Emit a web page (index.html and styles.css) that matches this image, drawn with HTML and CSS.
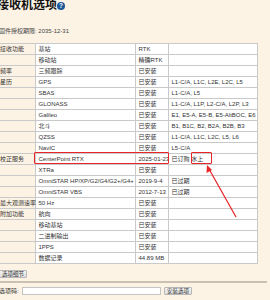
FILE: index.html
```html
<!DOCTYPE html>
<html lang="zh">
<head>
<meta charset="utf-8">
<link rel="stylesheet" href="styles.css">
</head>
<body>
<div class="page">
  <h1 class="title">接收机选项<span class="help">?</span></h1>
  <p class="info">固件授权期限: 2035-12-31</p>
  <table class="opts">
    <colgroup><col class="c1"><col class="c2"><col class="c3"><col class="c4"></colgroup>
    <tr><th>接收功能</th><td>基站</td><td>RTK</td><td></td></tr>
    <tr><th></th><td>移动站</td><td>精确RTK</td><td></td></tr>
    <tr><th>频率</th><td>三频跟踪</td><td>已安装</td><td></td></tr>
    <tr><th>星历</th><td>GPS</td><td>已安装</td><td>L1-C/A, L1C, L2E, L2C, L5</td></tr>
    <tr><th></th><td>SBAS</td><td>已安装</td><td>L1-C/A, L5</td></tr>
    <tr><th></th><td>GLONASS</td><td>已安装</td><td>L1-C/A, L1P, L2-C/A, L2P, L3</td></tr>
    <tr><th></th><td>Galileo</td><td>已安装</td><td>E1, E5-A, E5-B, E5-AltBOC, E6</td></tr>
    <tr><th></th><td>北斗</td><td>已安装</td><td>B1, B1C, B2, B2A, B2B, B3</td></tr>
    <tr><th></th><td>QZSS</td><td>已安装</td><td>L1-C/A, L1C, L2C, L5, L6</td></tr>
    <tr><th></th><td>NavIC</td><td>已安装</td><td>L5-C/A</td></tr>
    <tr><th>校正服务</th><td>CenterPoint RTX</td><td>2025-01-23</td><td>已订购 水上</td></tr>
    <tr><th></th><td>XTRa</td><td>已安装</td><td></td></tr>
    <tr><th></th><td>OmniSTAR HP/XP/G2/G4/G2+/G4+</td><td>2019-9-4</td><td>已过期</td></tr>
    <tr><th></th><td>OmniSTAR VBS</td><td>2012-7-13</td><td>已过期</td></tr>
    <tr><th>最大观测速率</th><td>50 Hz</td><td>已安装</td><td></td></tr>
    <tr><th>附加功能</th><td>航向</td><td>已安装</td><td></td></tr>
    <tr><th></th><td>移动基站</td><td>已安装</td><td></td></tr>
    <tr><th></th><td>二进制输出</td><td>已安装</td><td></td></tr>
    <tr><th></th><td>1PPS</td><td>已安装</td><td></td></tr>
    <tr><th></th><td>数据记录</td><td>44.89 MB</td><td></td></tr>
  </table>
  <div class="details"><button class="btn">选项细节</button></div>
  <div class="install">
    <label class="lbl">选项码:</label>
    <input class="code" type="text">
    <button class="btn">安装选项</button>
  </div>

  <div class="mark mark-a"></div>
  <div class="mark mark-b"></div>
  <svg class="arrow" width="270" height="300" viewBox="0 0 270 300">
    <line x1="236" y1="218" x2="209" y2="170" stroke="#e8262a" stroke-width="1.3"/>
    <polygon points="207,166 206.5,174 212,171" fill="#e8262a"/>
  </svg>
</div>
</body>
</html>
```
FILE: styles.css
```css
* { box-sizing: border-box; }
html, body { margin: 0; padding: 0; }
body {
  background: #fdf3e5;
  font-family: "Liberation Sans", Arial, "Noto Sans CJK SC", sans-serif;
  color: #333;
  width: 270px;
  height: 300px;
  overflow: hidden;
}
.page {
  position: relative;
  width: 270px;
  height: 300px;
}
.title {
  margin: -1px 0 0 -3px;
  font-size: 12px;
  line-height: 13px;
  font-weight: bold;
  color: #111;
  display: flex;
  align-items: center;
  gap: 0;
}
.help {
  display: inline-flex;
  align-items: center;
  justify-content: center;
  width: 8px;
  height: 8px;
  border-radius: 50%;
  background: #1d5799;
  color: #fff;
  font-size: 6.5px;
  line-height: 8px;
  font-weight: bold;
  margin-top: 1px;
}
.info {
  margin: 15px 0 0 -1px;
  font-size: 6px;
  line-height: 8px;
  color: #444;
}
.opts {
  margin: 8px 0 0 -4px;
  border-collapse: collapse;
  table-layout: fixed;
  width: 261px;
  font-size: 6px;
}
.c1 { width: 39px; }
.c2 { width: 100px; }
.c3 { width: 33px; }
.c4 { width: 89px; }
.opts tr { height: 11px; }
.opts th, .opts td {
  border: 1px solid #c9c9c9;
  padding: 0 2px 0 3px;
  line-height: 9px;
  height: 11px;
  white-space: nowrap;
  overflow: visible;
  text-align: left;
  font-weight: normal;
  color: #333;
}
.opts th {
  background: transparent;
  padding-left: 4px;
  border-left: none;
}
.opts td { background: #fff; }
.details {
  margin: 6px 0 0 -1px;
  padding-bottom: 3px;
  border-bottom: 2px solid #cbc1b3;
  width: 268px;
}
.btn {
  font-family: inherit;
  font-size: 5.5px;
  line-height: 6px;
  height: 8px;
  padding: 0 2px;
  border: 1px solid #b8b8b8;
  border-radius: 1px;
  background: linear-gradient(#f6f6f6, #dcdcdc);
  color: #333;
  display: block;
  white-space: nowrap;
}
.install {
  display: flex;
  align-items: center;
  gap: 2px;
  margin: 4px 0 0 -1px;
}
.lbl {
  font-size: 6px;
  line-height: 8px;
  color: #333;
  white-space: nowrap;
  flex: none;
  width: 21px;
}
.code {
  width: 139px;
  height: 8px;
  border: 1px solid #c4c4c4;
  background: #fff;
  padding: 0;
  margin: 0 1px 0 0;
  flex: none;
}
.mark {
  position: absolute;
  border: 1.3px solid #e8262a;
  border-radius: 1px;
}
.mark-a { left: 34px; top: 153px; width: 135px; height: 12px; }
.mark-b { left: 191px; top: 153px; width: 21px; height: 12px; }
.arrow { position: absolute; left: 0; top: 0; pointer-events: none; }
```
